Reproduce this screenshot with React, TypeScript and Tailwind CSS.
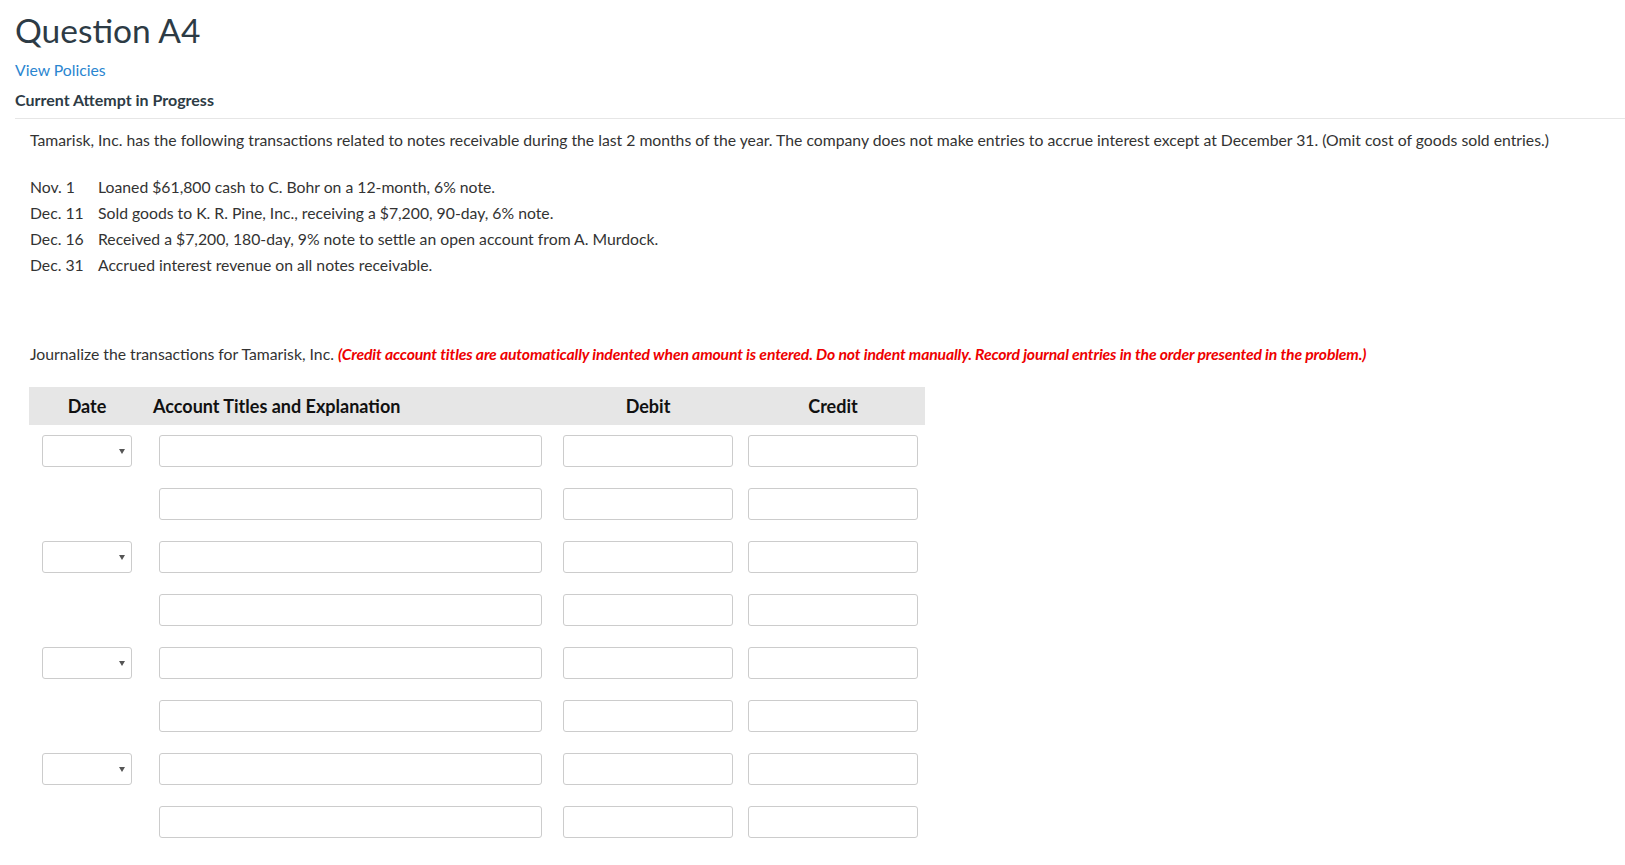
import React from "react";

const rows = [true, false, true, false, true, false, true, false];

function DateSelect() {
  return (
    <div className="w-[90px] h-[32px] border border-[#cccccc] rounded-[3px] bg-white flex items-center justify-end pr-[6px]">
      <svg width="6" height="5" viewBox="0 0 6 5" className="text-[#555]">
        <path d="M0 0h6L3 5z" fill="currentColor" />
      </svg>
    </div>
  );
}

function Field({ w }: { w: string }) {
  return <div className={`${w} h-[32px] border border-[#cccccc] rounded-[3px] bg-white`} />;
}

const transactions = [
  ["Nov. 1", "Loaned $61,800 cash to C. Bohr on a 12-month, 6% note."],
  ["Dec. 11", "Sold goods to K. R. Pine, Inc., receiving a $7,200, 90-day, 6% note."],
  ["Dec. 16", "Received a $7,200, 180-day, 9% note to settle an open account from A. Murdock."],
  ["Dec. 31", "Accrued interest revenue on all notes receivable."],
];

export default function App() {
  return (
    <div className="min-h-screen bg-white font-['Lato',sans-serif] text-[#2d3b45]">
      <div className="pl-[15px]">
        <h1 className="pt-[9px] text-[33.5px] leading-[42px] font-normal">Question A4</h1>
        <a href="#" className="block w-fit mt-[9px] text-[15.75px] leading-5 text-[#2b86d0]">
          View Policies
        </a>
        <div className="mt-[10px] text-[16px] leading-5 font-bold">Current Attempt in Progress</div>
        <div className="mt-[8px] border-t border-[#e6e6e6]" />

        <div className="pl-[15px] pt-[11px] text-[15.75px] text-[#333]">
          <p className="leading-5">
            Tamarisk, Inc. has the following transactions related to notes receivable during the last 2 months of the year. The company does not make entries to accrue interest except at December 31. (Omit cost of goods sold entries.)
          </p>

          <div className="mt-[24px] flex flex-col">
            {transactions.map(([d, t]) => (
              <div key={d} className="flex leading-[26px]">
                <span className="w-[68px] shrink-0">{d}</span>
                <span>{t}</span>
              </div>
            ))}
          </div>

          <p className="mt-[66px] leading-5">
            Journalize the transactions for Tamarisk, Inc.{" "}
            <span className="font-bold italic text-[#ee0000] tracking-[-0.15px]">
              (Credit account titles are automatically indented when amount is entered. Do not indent manually. Record journal entries in the order presented in the problem.)
            </span>
          </p>

          <div className="-ml-px mt-[23px] w-[896px]">
            <div className="flex h-[38px] bg-[#e6e6e6] pl-[13px] pr-[7px] text-[18px] leading-[38px] font-bold text-[#111]">
              <div className="w-[90px] text-center">Date</div>
              <div className="ml-[21px] w-[389px]">Account Titles and Explanation</div>
              <div className="ml-[21px] w-[170px] text-center">Debit</div>
              <div className="ml-[15px] w-[170px] text-center">Credit</div>
            </div>

            <div className="mt-[10px] flex flex-col gap-[21px] pl-[13px]">
              {rows.map((hasDate, i) => (
                <div key={i} className="flex">
                  {hasDate ? <DateSelect /> : <div className="w-[90px] shrink-0" />}
                  <div className="ml-[27px]">
                    <Field w="w-[383px]" />
                  </div>
                  <div className="ml-[21px]">
                    <Field w="w-[170px]" />
                  </div>
                  <div className="ml-[15px]">
                    <Field w="w-[170px]" />
                  </div>
                </div>
              ))}
            </div>
          </div>
        </div>
      </div>
    </div>
  );
}
